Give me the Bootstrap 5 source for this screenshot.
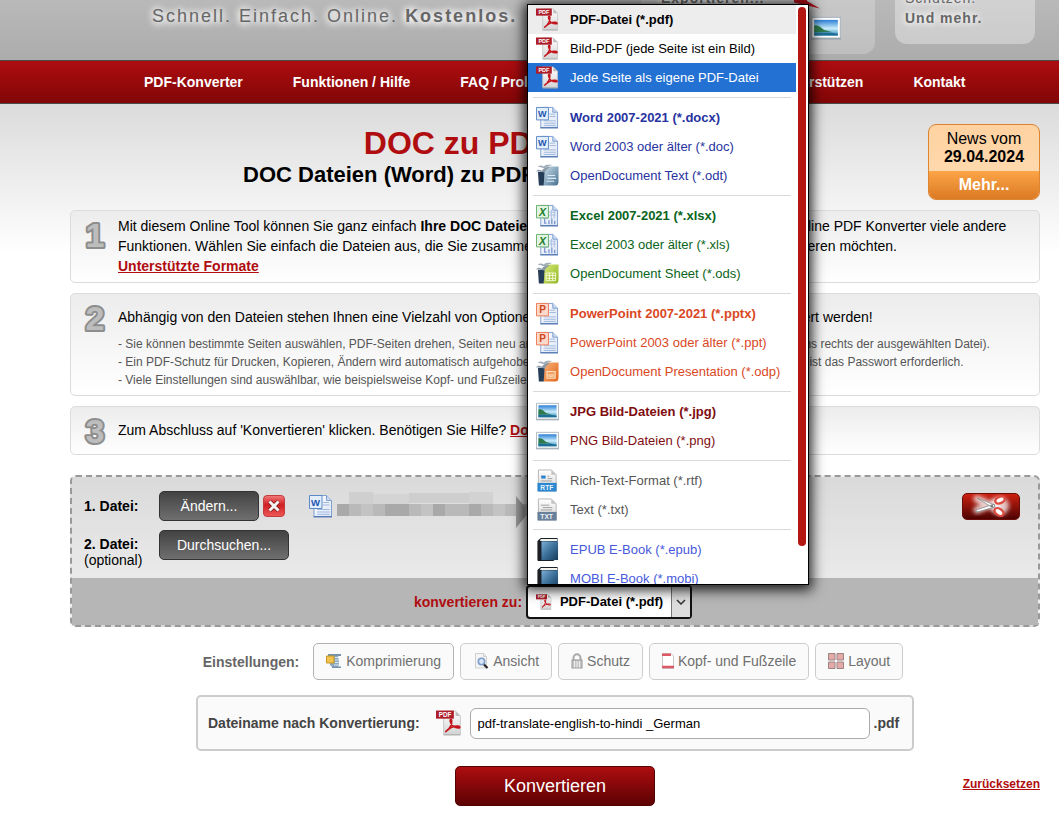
<!DOCTYPE html>
<html lang="de">
<head>
<meta charset="utf-8">
<meta name="viewport" content="width=device-width, initial-scale=1">
<title>DOC zu PDF konvertieren</title>
<link href="https://cdn.jsdelivr.net/npm/bootstrap@5.3.0/dist/css/bootstrap.min.css" rel="stylesheet">
<style>
  :root { --brand: #b00d10; }
  body { font-family: "Liberation Sans", Arial, sans-serif; font-size: 14px; line-height: 20px; color: #000; background: #fff; overflow-x: hidden; }
  a { color: var(--brand); font-weight: 700; }
  svg { flex: none; display: block; }
  .letter { font-family: "Liberation Sans", Arial, sans-serif; font-weight: 700; }

  .site-head { height: 60px; background: linear-gradient(#b9b9b9, #acacac); padding: 0 24px 0 152px; color: #666; gap: 20px; }
  .slogan { font-size: 18px; line-height: 24px; letter-spacing: 2px; margin-bottom: 32px; text-shadow: 0 0 6px #fff, 0 0 10px #fff, 0 2px 8px #fff; white-space: nowrap; }
  .promo { background: rgba(255,255,255,.35); border-radius: 12px; letter-spacing: 1px; height: 90px; text-shadow: 0 0 6px #fff, 0 0 8px #fff; }
  .promo-export { width: 234px; margin-bottom: 6px; background: rgba(255,255,255,.22); padding: 24px 34px 0 20px; }
  .promo-more { width: 140px; margin-bottom: 16px; padding: 34px 10px 0; }

  .main-nav { background: linear-gradient(#ad0d10, #820607); border-top: 1px solid #4a4a4a; border-bottom: 1px solid #4a4a4a; height: 44px; padding-left: 119px; }
  .main-nav .navbar-nav .nav-link { color: #fff; font-weight: 700; padding: 0 25px; line-height: 42px; white-space: nowrap; }

  .page { background: linear-gradient(#dbdbdb, #fff 150px); padding: 20px 19px 8px 70px; }
  .page-top { margin-bottom: 10px; }
  .titles { width: 80%; }
  h1 { font-size: 32px; line-height: 38px; font-weight: 700; color: var(--brand); margin: 0; }
  h2 { font-size: 22px; line-height: 26px; font-weight: 700; margin: 0; }
  .news { width: 112px; border: 1px solid #dd8530; border-radius: 8px; overflow: hidden; font-size: 16px; line-height: 18px; color: #000; background: linear-gradient(#ffd2a0, #fedcb4); }
  .news-date { padding: 5px 0 5px; }
  .news-more { background: linear-gradient(#fca547, #db7a24); color: #fff; line-height: 28px; }

  .step { border: 1px solid #dcdcdc; border-radius: 5px; background: linear-gradient(#ececec, #fff); margin-bottom: 10px; padding: 5px 30px 6px 9px; gap: 9px; }
  .step-no { width: 29px; height: 32px; }
  .step-no text { font: 700 34px "Liberation Sans", Arial, sans-serif; fill: #bdbdbd; stroke: #8d8d8d; stroke-width: 4px; paint-order: stroke; stroke-linejoin: round; }
  .hints { font-size: 12px; line-height: 18px; color: #555; }

  .files { border: 2px dashed #999; border-radius: 6px; background: linear-gradient(#dadada, #f1f1f1); margin-top: 20px; }
  .files-body { padding: 14px 18px 10px 12px; }
  .file-rows { display: grid; gap: 9px; }
  .file-label { width: 75px; line-height: 16px; }
  .file-optional { padding-top: 6px; }
  .btn-file { color: #fff; border: 1px solid #333; border-radius: 5px; background: linear-gradient(#434343, #6f6f6f); height: 30px; padding: 0; line-height: 28px; font-size: 14px; }
  .btn-file:hover { color: #fff; }
  .btn-change { width: 100px; }
  .btn-browse { width: 130px; }
  .btn-cut { width: 58px; height: 27px; margin-top: 2px; padding: 0; border: 1px solid #6b0d08; border-radius: 5px; background: linear-gradient(#cd2010, #4c0302); }
  .target-bar { background: #b6b6b6; padding: 7px 4px 6px 0; gap: 4px; color: var(--brand); }
  .picker { width: 166px; height: 34px; border: 2px solid #111; border-radius: 4px; background: #fff; font-size: 13px; font-weight: 700; color: #000; padding: 0 0 0 8px; }
  .picker-arrow { width: 19px; border-left: 1px solid #777; background: #ddd; }

  .format-menu { position: absolute; left: 1px; bottom: 100%; z-index: 10; width: 282px; height: 581px; border: 1px solid #000; background: #fff; color: #000; box-shadow: 0 2px 12px 3px rgba(0,0,0,.85); overflow: hidden; font-size: 13px; }
  .format-menu ul { width: 268px; }
  .format-menu .opt { display: flex; align-items: center; width: 100%; height: 29px; border: 0; background: none; padding: 0 0 0 8px; gap: 11px; text-align: left; color: inherit; font-weight: inherit; white-space: nowrap; }
  .format-menu hr { margin: 5px 5px; border-top: 1px solid #d9d9d9; opacity: 1; }
  .format-menu .first-opt { background: #ededed; }
  .format-menu .hover-opt { background: #2371d3; color: #fff; }
  .scroll-thumb { position: absolute; right: 2px; top: 2px; width: 8px; height: 539px; border-radius: 4px; background: #b41712; }
  .c-word { color: #2733a0; } .c-excel { color: #0a6420; } .c-ppt { color: #d9481f; }
  .c-img { color: #800d10; } .c-text { color: #555; } .c-book { color: #4759db; }

  .settings { gap: 6px; padding-right: 4px; margin-top: 16px; color: #666; }
  .settings .btn { height: 37px; border: 1px solid #ccc; border-radius: 5px; background: #fafafa; color: #707070; font-size: 14px; line-height: 20px; padding: 0 12px 2px; gap: 4px; white-space: nowrap; }
  .settings .btn:first-of-type { border-color: #b3b3b3; }
  .filename { width: 718px; max-width: 100%; height: 56px; border: 2px solid #ccc; border-radius: 5px; background: #fafafa; margin: 15px auto; padding: 0 10px; color: #444; }
  .filename input { width: 400px; height: 31px; border: 1px solid #aaa; border-radius: 6px; font-size: 13px; padding: 0 7px; color: #000; }
  .btn-convert { width: 200px; height: 40px; border: 1px solid #520303; border-radius: 5px; background: linear-gradient(#ae0d10, #5c0203); color: #fff; font-size: 18px; padding: 0; }
  .reset-link { font-size: 12px; line-height: 18px; padding-bottom: 4px; }
</style>
</head>
<body>

<svg width="0" height="0" class="position-absolute" aria-hidden="true">
  <defs>
    <linearGradient id="gPage" x1="0" y1="0" x2="1" y2="1"><stop offset="0" stop-color="#fff"/><stop offset="1" stop-color="#dde6f6"/></linearGradient>
    <linearGradient id="gGrey" x1="0" y1="0" x2="0" y2="1"><stop offset="0" stop-color="#fff"/><stop offset="1" stop-color="#d4d4d4"/></linearGradient>
    <linearGradient id="gSky" x1="0" y1="0" x2="0" y2="1"><stop offset="0" stop-color="#2c7fd6"/><stop offset=".55" stop-color="#c8ecfb"/><stop offset="1" stop-color="#2d86b8"/></linearGradient>
    <linearGradient id="gBook" x1="0" y1="0" x2="1" y2="1"><stop offset="0" stop-color="#7fb0d8"/><stop offset=".5" stop-color="#3b7099"/><stop offset="1" stop-color="#173a5a"/></linearGradient>
    <linearGradient id="gRed" x1="0" y1="0" x2="0" y2="1"><stop offset="0" stop-color="#f47a7a"/><stop offset=".45" stop-color="#cf1f22"/><stop offset="1" stop-color="#f05a5a"/></linearGradient>
    <linearGradient id="gOdt" x1="0" y1="0" x2="1" y2="1"><stop offset="0" stop-color="#cfe0ec"/><stop offset="1" stop-color="#45708f"/></linearGradient>
    <linearGradient id="gOds" x1="0" y1="0" x2="1" y2="1"><stop offset="0" stop-color="#d9ea7c"/><stop offset="1" stop-color="#8fb51d"/></linearGradient>
    <linearGradient id="gOdp" x1="0" y1="0" x2="1" y2="1"><stop offset="0" stop-color="#f8b27a"/><stop offset="1" stop-color="#e2661a"/></linearGradient>
    <filter id="glow" x="-50%" y="-50%" width="200%" height="200%"><feGaussianBlur stdDeviation="2"/></filter>
  </defs>

  <symbol id="i-pdf" viewBox="0 0 24 24">
    <path d="M7 1h11l4.500 4.500v17H7z" fill="url(#gGrey)" stroke="#c4c4c4" stroke-width=".8"/>
    <path d="M18 1l4.500 4.500h-4.500z" fill="#bdbdbd"/>
    <path d="M7 23h15.500" stroke="#a9a9a9"/>
    <path d="M9 20c3.500-2 6-7 5.500-10.500-.3-1.500-1.800-.9-1.400 1 .8 3.600 4 6.300 8.200 6 1.300-.2.700-1.500-1.300-1.600-3.500-.1-7.500 1.400-11 5.100z" fill="none" stroke="#c4141b" stroke-width="1.500" stroke-linejoin="round"/>
    <path d="M0 .5h16.500v7.500H0z" fill="#ae1d2a"/>
    <text x="2.500" y="6.300" class="letter" font-size="5.800" fill="#fff">PDF</text>
  </symbol>

  <symbol id="s-sheet" viewBox="0 0 24 24">
    <path d="M5 1.500h12.500l5 5v16H5z" fill="url(#gPage)" stroke="#7f9fce"/>
    <path d="M17.500 1.500v5h5" fill="#c9daf2" stroke="#7f9fce"/>
    <path d="M4.500 22.800h18.500" stroke="#4a6fae" stroke-width="1.200"/>
  </symbol>
  <symbol id="i-word" viewBox="0 0 24 24">
    <use href="#s-sheet"/>
    <path d="M14 8.500h6M14 11h6.500M8 15.500h12.500M8 18h12.500M8 20.300h12.500" stroke="#9fb8de"/>
    <path d="M.5 1.500h12.500v13H.5z" fill="#e3eefb" stroke="#5d8ac6"/>
    <text x="2" y="11.500" class="letter" font-size="9.500" fill="#1c54b0">W</text>
  </symbol>
  <symbol id="i-excel" viewBox="0 0 24 24">
    <use href="#s-sheet"/>
    <path d="M13 8.500h8M13 11.500h8M16 6v9M19 8v7M7 15h6" stroke="#a9bee2"/>
    <path d="M13.500 21v-4M16.500 21v-6M19.500 21v-3.500M9 15v5h2" stroke="#7e99cf" stroke-width="1.400" fill="none"/>
    <path d="M.5 1.500h12.500v13H.5z" fill="#e2f5e2" stroke="#69ad6c"/>
    <text x="3" y="12" class="letter" font-size="11" font-style="italic" fill="#1b7c2c">X</text>
  </symbol>
  <symbol id="i-ppt" viewBox="0 0 24 24">
    <use href="#s-sheet"/>
    <path d="M14 8.500h6M14 11h6.500M8 15.500h12.500M8 18h12.500M8 20.300h12.500" stroke="#9fb8de"/>
    <path d="M.5 1.500h12.500v13H.5z" fill="#fdd9cb" stroke="#ea7a57"/>
    <text x="3.300" y="11.800" class="letter" font-size="10.500" fill="#d2451a">P</text>
  </symbol>

  <symbol id="s-office" viewBox="0 0 24 24">
    <path d="M2 8h7c-.5 5-.5 10-1 14.500H3z" fill="#263d58"/>
    <path d="M0 8c2-3 4-2 6-1 1-2 4-4 9-4-3 1.500-5 3.500-6 6C6 7.500 3 7 0 8z" fill="#8a9aa8"/>
    <path d="M2 3c2-2 4-1.500 6-.5 2-2 5-2 9-1.500-3 1-6 2-8 4C7 3.500 5 3 2 3z" fill="#a2afba"/>
  </symbol>
  <symbol id="i-odt" viewBox="0 0 24 24">
    <path d="M9 2.500h14.500v15c0 3.500-1 5-3 5H7.500C9 17 7 8 9 2.500z" fill="url(#gOdt)"/><use href="#s-office"/>
    <path d="M12 12h8M12 15h9M11 18h8" stroke="#dcebf5" stroke-width="1.300"/>
  </symbol>
  <symbol id="i-ods" viewBox="0 0 24 24">
    <path d="M9 2.500h14.500v15c0 3.500-1 5-3 5H7.500C9 17 7 8 9 2.500z" fill="url(#gOds)"/><use href="#s-office"/>
    <path d="M10.500 11.500h10v8h-10zM10.500 14h10M10.500 17h10M14 11.500v8M17.500 11.500v8" stroke="#f7fbd8" fill="none"/>
  </symbol>
  <symbol id="i-odp" viewBox="0 0 24 24">
    <path d="M9 2.500h14.500v15c0 3.500-1 5-3 5H7.500C9 17 7 8 9 2.500z" fill="url(#gOdp)"/><use href="#s-office"/>
    <path d="M11.500 12h8.500v7h-8.500z" fill="#f6a25f" stroke="#fde0c4" stroke-width="1.200"/><path d="M13.500 15.500h4.500v1.500h-4.500z" fill="none" stroke="#fde0c4"/>
  </symbol>

  <symbol id="i-img" viewBox="0 0 24 24">
    <path d="M.5 3.500h23v16.500H.5z" fill="#fff" stroke="#aeb9c2"/>
    <path d="M2.500 5.500h19v12.500h-19z" fill="url(#gSky)"/>
    <path d="M2.500 10c3-1 5 1 8 3.500l6 1.500-14 .5z" fill="#2f7a4c"/>
    <path d="M2.500 15.500h13l6 1v1.500h-19z" fill="#1e6f95"/>
    <path d="M0 20.700h24" stroke="#8b98a3" stroke-width=".8"/>
  </symbol>
  <symbol id="i-rtf" viewBox="0 0 24 24">
    <path d="M2.500 1h13.500l5 5v17h-18.500z" fill="url(#gGrey)" stroke="#b5b5b5"/><path d="M16 1v5h5z" fill="#c2c2c2"/>
    <path d="M5 7.500h5M12 7.500h2M12 10h5M5 12.500h12" stroke="#9f9f9f"/><path d="M5.500 7h4.500v3H5.500z" fill="#2683cf"/>
    <path d="M1.500 14.500h20V23.500h-20z" fill="#2d87d0"/><text x="4.500" y="21.500" class="letter" font-size="7" fill="#e7f4ff">RTF</text>
  </symbol>
  <symbol id="i-txt" viewBox="0 0 24 24">
    <path d="M2.500 1h13.500l5 5v17h-18.500z" fill="url(#gGrey)" stroke="#b5b5b5"/><path d="M16 1v5h5z" fill="#c2c2c2"/>
    <path d="M5 7.500h9M7 10h10M5 12.500h12" stroke="#9f9f9f"/>
    <path d="M1.500 14.500h20V23.500h-20z" fill="#68809a"/><text x="4.500" y="21.500" class="letter" font-size="7" fill="#eef3f8">TXT</text>
  </symbol>
  <symbol id="i-book" viewBox="0 0 24 24">
    <path d="M2 2.500L5 0h17.500v3L20 22.500 18 24H2z" fill="#17202b"/>
    <path d="M5 1h17v2H4z" fill="#f3f3ee"/>
    <path d="M5.500 3.500h17.500V23H5.500z" fill="url(#gBook)"/>
    <path d="M1.500 3h4v20.500h-4z" fill="#1b1f26"/>
  </symbol>

  <symbol id="i-delete" viewBox="0 0 22 22">
    <rect x=".5" y=".5" width="21" height="21" rx="3.500" fill="url(#gRed)" stroke="#c43c3c"/>
    <path d="M6.500 6.500l9 9M15.500 6.500l-9 9" stroke="#7d1010" stroke-width="4.500"/>
    <path d="M6.500 6.500l9 9M15.500 6.500l-9 9" stroke="#f2f2f2" stroke-width="3"/>
  </symbol>
  <symbol id="i-zip" viewBox="0 0 16 16">
    <path d="M4 1h9l-1 3 1 3v4l-1 4H7l-3-3z" fill="#8da9c0"/>
    <path d="M2 1h13v2H2zM6 13.500h9v1.500H6z" fill="#7893ab"/>
    <path d="M.5 3h7.500v7H.5z" fill="#f2c34d" stroke="#c5952b"/>
    <path d="M9 4.500h3M9 7h4M9 9.500h4M8 12h5" stroke="#dbe6ef" stroke-width="1.200"/>
  </symbol>
  <symbol id="i-view" viewBox="0 0 16 16">
    <path d="M2.500.5h8l3 3v11.500h-11z" fill="#f4f4f4" stroke="#cfcfcf"/><path d="M10.500.5v3h3" fill="none" stroke="#cfcfcf"/>
    <circle cx="8.500" cy="8.500" r="3.200" fill="#d6e6f8" stroke="#7d9dca" stroke-width="1.600"/>
    <path d="M11 11.500l3.500 3.500" stroke="#222" stroke-width="2.200"/>
  </symbol>
  <symbol id="i-lock" viewBox="0 0 12 16">
    <path d="M2.500 8V5a3.500 3.800 0 0 1 7 0v3" fill="none" stroke="#aaa" stroke-width="2"/>
    <rect x="1" y="7" width="10" height="8" fill="#c4c4c4" stroke="#999"/>
    <path d="M3.500 8v6.500M6 8v6.500M8.500 8v6.500" stroke="#efefef"/>
  </symbol>
  <symbol id="i-hf" viewBox="0 0 12 16">
    <path d="M.5.5h8.500l2.500 2.500v12.500H.5z" fill="#fff" stroke="#c9c9c9"/>
    <path d="M0 1.700h9M0 14h12" stroke="#dc5a68" stroke-width="2.400"/>
  </symbol>
  <symbol id="i-grid" viewBox="0 0 16 16">
    <g fill="#e4a9a9" stroke="#9c8484"><path d="M.5.500h6.500v6.500H.5zM9 .5h6.500v6.500H9zM.5 9h6.500v6.500H.5zM9 9h6.500v6.500H9z"/></g>
  </symbol>
</svg>

<header class="site-head d-flex align-items-end overflow-hidden">
  <div class="slogan">Schnell. Einfach. Online. <strong>Kostenlos.</strong></div>
  <div class="promo promo-export ms-auto d-flex justify-content-between flex-shrink-0">
    <strong>Exportieren...</strong>
    <svg width="50" height="56" viewBox="0 0 50 56" class="overflow-visible" aria-hidden="true">
      <path d="M3 4h12l1 9 13 7.500-26-6z" fill="#b5121b"/>
      <svg x="20" y="25" width="30" height="30"><use href="#i-img"/></svg>
    </svg>
  </div>
  <div class="promo promo-more flex-shrink-0">Schützen.<br><strong>Und mehr.</strong></div>
</header>

<nav class="main-nav navbar-expand" aria-label="Hauptmenü">
  <div class="navbar-nav">
    <a class="nav-link" href="#">PDF-Konverter</a>
    <a class="nav-link" href="#">Funktionen / Hilfe</a>
    <a class="nav-link" href="#">FAQ / Probleme</a>
    <a class="nav-link" href="#">Weitere Software</a>
    <a class="nav-link" href="#">Unterstützen</a>
    <a class="nav-link" href="#">Kontakt</a>
  </div>
</nav>

<main class="page">
  <div class="page-top d-flex justify-content-between align-items-start">
    <div class="titles text-center">
      <h1>DOC zu PDF</h1>
      <h2>DOC Dateien (Word) zu PDF konvertieren</h2>
    </div>
    <a class="news text-center text-decoration-none fw-normal" href="#">
      <div class="news-date">News vom<br><strong>29.04.2024</strong></div>
      <div class="news-more fw-bold">Mehr...</div>
    </a>
  </div>

  <section class="step d-flex">
    <svg class="step-no mt-1" viewBox="0 0 29 32" aria-hidden="true"><text x="15" y="27" text-anchor="middle">1</text></svg>
    <div>Mit diesem Online Tool können Sie ganz einfach <strong>Ihre DOC Dateien in PDF konvertieren</strong>. Zudem bietet der Online PDF Konverter viele andere Funktionen. Wählen Sie einfach die Dateien aus, die Sie zusammenfügen oder einzeln in PDF-Dateien konvertieren möchten.<br>
      <a href="#">Unterstützte Formate</a></div>
  </section>

  <section class="step d-flex">
    <svg class="step-no mt-1" viewBox="0 0 29 32" aria-hidden="true"><text x="15" y="27" text-anchor="middle">2</text></svg>
    <div class="pt-2">
      <p class="mb-2">Abhängig von den Dateien stehen Ihnen eine Vielzahl von Optionen zur Verfügung, bevor alle Dateien konvertiert werden!</p>
      <div class="hints">- Sie können bestimmte Seiten auswählen, PDF-Seiten drehen, Seiten neu anordnen und vieles mehr (benutzen Sie dafür die Icons rechts der ausgewählten Datei).<br>
        - Ein PDF-Schutz für Drucken, Kopieren, Ändern wird automatisch aufgehoben; falls eine PDF-Datei zum Öffnen verschlüsselt ist, ist das Passwort erforderlich.<br>
        - Viele Einstellungen sind auswählbar, wie beispielsweise Kopf- und Fußzeilen, Layout und Schutz.</div>
    </div>
  </section>

  <section class="step d-flex">
    <svg class="step-no mt-1" viewBox="0 0 29 32" aria-hidden="true"><text x="15" y="27" text-anchor="middle">3</text></svg>
    <div class="pt-2">Zum Abschluss auf 'Konvertieren' klicken. Benötigen Sie Hilfe? <a href="#">Dokumentation</a></div>
  </section>

  <form onsubmit="return false">
    <div class="files">
      <div class="files-body d-flex justify-content-between align-items-start">
        <div class="file-rows">
          <div class="d-flex align-items-center">
            <div class="file-label"><strong>1. Datei:</strong></div>
            <button type="button" class="btn btn-file btn-change">Ändern...</button>
            <button type="button" class="btn p-0 border-0 ms-1" aria-label="Datei entfernen"><svg width="22" height="22"><use href="#i-delete"/></svg></button>
            <svg class="ms-4 me-1" width="24" height="24" aria-hidden="true"><use href="#i-word"/></svg>
            <svg class="overflow-visible" width="190" height="30" viewBox="0 1 190 30" aria-hidden="true">
              <path d="M12 2h24v12H12z" fill="#cfcfcf"/><path d="M36 4h36v10H36z" fill="#d4d4d4"/><path d="M72 3h60v10H72z" fill="#cecece"/><path d="M132 2h24v12h-24z" fill="#d2d2d2"/>
              <path d="M0 14h190v12H0z" fill="#b9b9b9"/>
              <path d="M0 14h12v12H0zM48 14h24v12H48zM96 14h12v12H96zM132 14h12v12h-12z" fill="#a9a9a9"/>
              <path d="M24 14h12v12H24zM84 14h12v12H84zM156 14h12v12h-12z" fill="#c3c3c3"/>
              <path d="M179 6l9 11v10l-9 11z" fill="#999"/>
            </svg>
          </div>
          <div class="d-flex align-items-start">
            <div class="file-label file-optional"><strong>2. Datei:</strong><br>(optional)</div>
            <button type="button" class="btn btn-file btn-browse">Durchsuchen...</button>
          </div>
        </div>
        <button type="button" class="btn btn-cut" aria-label="Datei teilen">
          <svg width="56" height="25" viewBox="0 0 56 25">
            <path d="M14 5l20 9M14 16l20-8" stroke="#fff" stroke-width="7" stroke-linecap="round" opacity=".8" filter="url(#glow)"/>
            <ellipse cx="37" cy="12" rx="9" ry="9" fill="#fff" opacity=".75" filter="url(#glow)"/>
            <path d="M14 4l18 7-2 3zM13 16l18-6 1 3-18 5z" fill="#fff" stroke="#8a8a8a" stroke-width=".8"/>
            <ellipse cx="37" cy="6" rx="5" ry="3.200" transform="rotate(-25 37 6)" fill="#fff" stroke="#dc4a40" stroke-width="2.400"/>
            <ellipse cx="36" cy="18" rx="5" ry="3.200" transform="rotate(35 36 18)" fill="#fff" stroke="#dc4a40" stroke-width="2.400"/>
            <circle cx="29" cy="12" r="1" fill="#555"/>
          </svg>
        </button>
      </div>

      <div class="target-bar d-flex justify-content-center align-items-center">
        <strong id="targetLabel">konvertieren zu:</strong>
        <div class="position-relative">
          <button type="button" class="picker d-flex align-items-center" aria-labelledby="targetLabel" aria-haspopup="listbox" aria-expanded="true">
            <svg width="16" height="16"><use href="#i-pdf"/></svg>
            <span class="mx-auto">PDF-Datei (*.pdf)</span>
            <span class="picker-arrow h-100 d-flex align-items-center justify-content-center">
              <svg width="10" height="6" viewBox="0 0 10 6"><path d="M1 1l4 4 4-4" fill="none" stroke="#333" stroke-width="1.500"/></svg>
            </span>
          </button>
          <div class="format-menu">
            <ul class="list-unstyled m-0">
              <li class="fw-bold first-opt"><button type="button" class="opt"><svg width="23" height="23"><use href="#i-pdf"/></svg>PDF-Datei (*.pdf)</button></li>
              <li><button type="button" class="opt"><svg width="23" height="23"><use href="#i-pdf"/></svg>Bild-PDF (jede Seite ist ein Bild)</button></li>
              <li class="hover-opt"><button type="button" class="opt"><svg width="23" height="23"><use href="#i-pdf"/></svg>Jede Seite als eigene PDF-Datei</button></li>
              <li><hr></li>
              <li class="c-word fw-bold"><button type="button" class="opt"><svg width="23" height="23"><use href="#i-word"/></svg>Word 2007-2021 (*.docx)</button></li>
              <li class="c-word"><button type="button" class="opt"><svg width="23" height="23"><use href="#i-word"/></svg>Word 2003 oder älter (*.doc)</button></li>
              <li class="c-word"><button type="button" class="opt"><svg width="23" height="23"><use href="#i-odt"/></svg>OpenDocument Text (*.odt)</button></li>
              <li><hr></li>
              <li class="c-excel fw-bold"><button type="button" class="opt"><svg width="23" height="23"><use href="#i-excel"/></svg>Excel 2007-2021 (*.xlsx)</button></li>
              <li class="c-excel"><button type="button" class="opt"><svg width="23" height="23"><use href="#i-excel"/></svg>Excel 2003 oder älter (*.xls)</button></li>
              <li class="c-excel"><button type="button" class="opt"><svg width="23" height="23"><use href="#i-ods"/></svg>OpenDocument Sheet (*.ods)</button></li>
              <li><hr></li>
              <li class="c-ppt fw-bold"><button type="button" class="opt"><svg width="23" height="23"><use href="#i-ppt"/></svg>PowerPoint 2007-2021 (*.pptx)</button></li>
              <li class="c-ppt"><button type="button" class="opt"><svg width="23" height="23"><use href="#i-ppt"/></svg>PowerPoint 2003 oder älter (*.ppt)</button></li>
              <li class="c-ppt"><button type="button" class="opt"><svg width="23" height="23"><use href="#i-odp"/></svg>OpenDocument Presentation (*.odp)</button></li>
              <li><hr></li>
              <li class="c-img fw-bold"><button type="button" class="opt"><svg width="23" height="23"><use href="#i-img"/></svg>JPG Bild-Dateien (*.jpg)</button></li>
              <li class="c-img"><button type="button" class="opt"><svg width="23" height="23"><use href="#i-img"/></svg>PNG Bild-Dateien (*.png)</button></li>
              <li><hr></li>
              <li class="c-text"><button type="button" class="opt"><svg width="23" height="23"><use href="#i-rtf"/></svg>Rich-Text-Format (*.rtf)</button></li>
              <li class="c-text"><button type="button" class="opt"><svg width="23" height="23"><use href="#i-txt"/></svg>Text (*.txt)</button></li>
              <li><hr></li>
              <li class="c-book"><button type="button" class="opt"><svg width="23" height="23"><use href="#i-book"/></svg>EPUB E-Book (*.epub)</button></li>
              <li class="c-book"><button type="button" class="opt"><svg width="23" height="23"><use href="#i-book"/></svg>MOBI E-Book (*.mobi)</button></li>
            </ul>
            <div class="scroll-thumb"></div>
          </div>
        </div>
      </div>
    </div>

    <div class="settings d-flex justify-content-center align-items-center">
      <strong class="me-2">Einstellungen:</strong>
      <button type="button" class="btn d-flex align-items-center"><svg width="16" height="16"><use href="#i-zip"/></svg>Komprimierung</button>
      <button type="button" class="btn d-flex align-items-center"><svg width="16" height="16"><use href="#i-view"/></svg>Ansicht</button>
      <button type="button" class="btn d-flex align-items-center"><svg width="12" height="16"><use href="#i-lock"/></svg>Schutz</button>
      <button type="button" class="btn d-flex align-items-center"><svg width="12" height="16"><use href="#i-hf"/></svg>Kopf- und Fußzeile</button>
      <button type="button" class="btn d-flex align-items-center"><svg width="16" height="16"><use href="#i-grid"/></svg>Layout</button>
    </div>

    <div class="filename d-flex align-items-center">
      <label class="fw-bold" for="fileName">Dateiname nach Konvertierung:</label>
      <svg class="ms-3 me-2" width="26" height="26" aria-hidden="true"><use href="#i-pdf"/></svg>
      <input id="fileName" type="text" value="pdf-translate-english-to-hindi _German">
      <strong class="ms-1">.pdf</strong>
    </div>

    <div class="row g-0 align-items-center">
      <div class="col"></div>
      <div class="col-auto"><button type="submit" class="btn btn-convert">Konvertieren</button></div>
      <div class="col text-end reset-link"><a href="#">Zurücksetzen</a></div>
    </div>
  </form>
</main>

<script src="https://cdn.jsdelivr.net/npm/bootstrap@5.3.0/dist/js/bootstrap.bundle.min.js"></script>
</body>
</html>
